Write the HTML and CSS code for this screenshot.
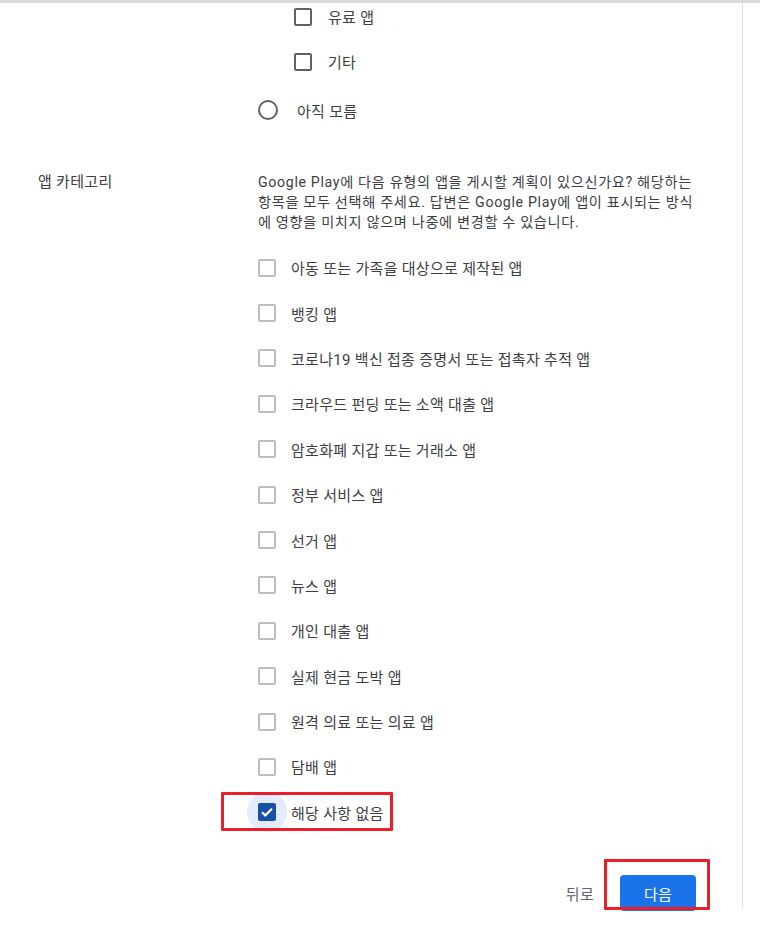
FILE: index.html
```html
<!DOCTYPE html>
<html lang="ko">
<head>
<meta charset="utf-8">
<link rel="stylesheet" href="styles.css">
</head>
<body>
<div class="page">
  <div class="main">
    <div class="sub-options">
      <div class="opt"><span class="box dark"></span><span class="opt-text">유료 앱</span></div>
      <div class="opt"><span class="box dark"></span><span class="opt-text">기타</span></div>
    </div>
    <div class="radio-row"><span class="radio"></span><span class="radio-text">아직 모름</span></div>

    <div class="section">
      <div class="label">앱 카테고리</div>
      <div class="content">
        <p class="desc">Google Play에 다음 유형의 앱을 게시할 계획이 있으신가요? 해당하는 항목을 모두 선택해 주세요. 답변은 Google Play에 앱이 표시되는 방식에 영향을 미치지 않으며 나중에 변경할 수 있습니다.</p>
        <ul class="list">
          <li class="item"><span class="box"></span><span>아동 또는 가족을 대상으로 제작된 앱</span></li>
          <li class="item"><span class="box"></span><span>뱅킹 앱</span></li>
          <li class="item"><span class="box"></span><span>코로나19 백신 접종 증명서 또는 접촉자 추적 앱</span></li>
          <li class="item"><span class="box"></span><span>크라우드 펀딩 또는 소액 대출 앱</span></li>
          <li class="item"><span class="box"></span><span>암호화폐 지갑 또는 거래소 앱</span></li>
          <li class="item"><span class="box"></span><span>정부 서비스 앱</span></li>
          <li class="item"><span class="box"></span><span>선거 앱</span></li>
          <li class="item"><span class="box"></span><span>뉴스 앱</span></li>
          <li class="item"><span class="box"></span><span>개인 대출 앱</span></li>
          <li class="item"><span class="box"></span><span>실제 현금 도박 앱</span></li>
          <li class="item"><span class="box"></span><span>원격 의료 또는 의료 앱</span></li>
          <li class="item"><span class="box"></span><span>담배 앱</span></li>
          <li class="item last">
            <span class="halo"><span class="box checked"><svg viewBox="0 0 18 18" width="18" height="18"><path d="M4 9.2l3.3 3.2L14 5.8" fill="none" stroke="#fff" stroke-width="2.2"/></svg></span></span>
            <span>해당 사항 없음</span>
            <span class="annot annot-item"></span>
          </li>
        </ul>
      </div>
    </div>

    <div class="actions">
      <button class="btn-text">뒤로</button>
      <button class="btn-primary">다음<span class="annot annot-btn"></span></button>
    </div>
  </div>
</div>
</body>
</html>
```
FILE: styles.css
```css
* { box-sizing: border-box; }
html, body { margin: 0; padding: 0; background: #fff; }
body {
  font-family: Roboto, "Noto Sans CJK KR", sans-serif;
  font-size: 15px;
  letter-spacing: 0.3px;
  color: #3c4043;
}
.page {
  width: 760px;
  height: 931px;
  border-top: 3px solid #dadce0;
  overflow: hidden;
}
.main {
  width: 743px;
  height: 914px;
  border-right: 1px solid #dadce0;
}
.sub-options {
  padding-left: 294px;
}
.opt {
  height: 45px;
  display: flex;
  align-items: center;
  margin-top: -9px;
  margin-bottom: 9px;
}
.box {
  display: inline-block;
  width: 18px;
  height: 18px;
  border: 2px solid #bdbdbd;
  border-radius: 2px;
  flex: none;
}
.box.dark { border-color: #5f6368; }
.opt-text { margin-left: 16px; }
.radio-row {
  display: flex;
  align-items: center;
  padding-left: 258px;
  height: 20px;
  margin-top: 16px;
}
.radio {
  width: 20px;
  height: 20px;
  border: 2px solid #5f6368;
  border-radius: 50%;
  flex: none;
}
.radio-text { margin-left: 19px; }

.section {
  display: flex;
  margin-top: 52px;
}
.label {
  width: 258px;
  padding-left: 38px;
  line-height: 20px;
}
.content { width: 442px; }
.desc {
  margin: 0;
  width: 440px;
  line-height: 20px;
  font-size: 14.2px;
  letter-spacing: 0.65px;
}
.list {
  list-style: none;
  margin: 13px 0 0;
  padding: 0;
}
.item {
  height: 45.4px;
  display: flex;
  align-items: center;
  gap: 15px;
  position: relative;
}
.halo {
  width: 40px;
  height: 40px;
  margin: 0 -11px;
  border-radius: 50%;
  background: #e3ecfb;
  display: flex;
  align-items: center;
  justify-content: center;
  flex: none;
}
.box.checked {
  background: #1a4fa8;
  border: none;
  display: flex;
  align-items: center;
  justify-content: center;
}
.annot {
  position: absolute;
  border: 3px solid #ea1f2a;
  border-radius: 1px;
  pointer-events: none;
}
.annot-item {
  left: -37px;
  top: 2px;
  width: 172px;
  height: 39px;
}
.actions {
  display: flex;
  justify-content: flex-end;
  align-items: center;
  padding-right: 46px;
  margin-top: 40px;
  gap: 26px;
}
.btn-text {
  background: none;
  border: none;
  font: inherit;
  letter-spacing: inherit;
  color: #5f6368;
  padding: 0;
}
.btn-primary {
  position: relative;
  width: 76px;
  height: 36px;
  border: none;
  border-radius: 4px;
  background: #1a73e8;
  color: #fff;
  font: inherit;
  letter-spacing: inherit;
}
.annot-btn {
  left: -16px;
  top: -16px;
  width: 106px;
  height: 51px;
}
```
